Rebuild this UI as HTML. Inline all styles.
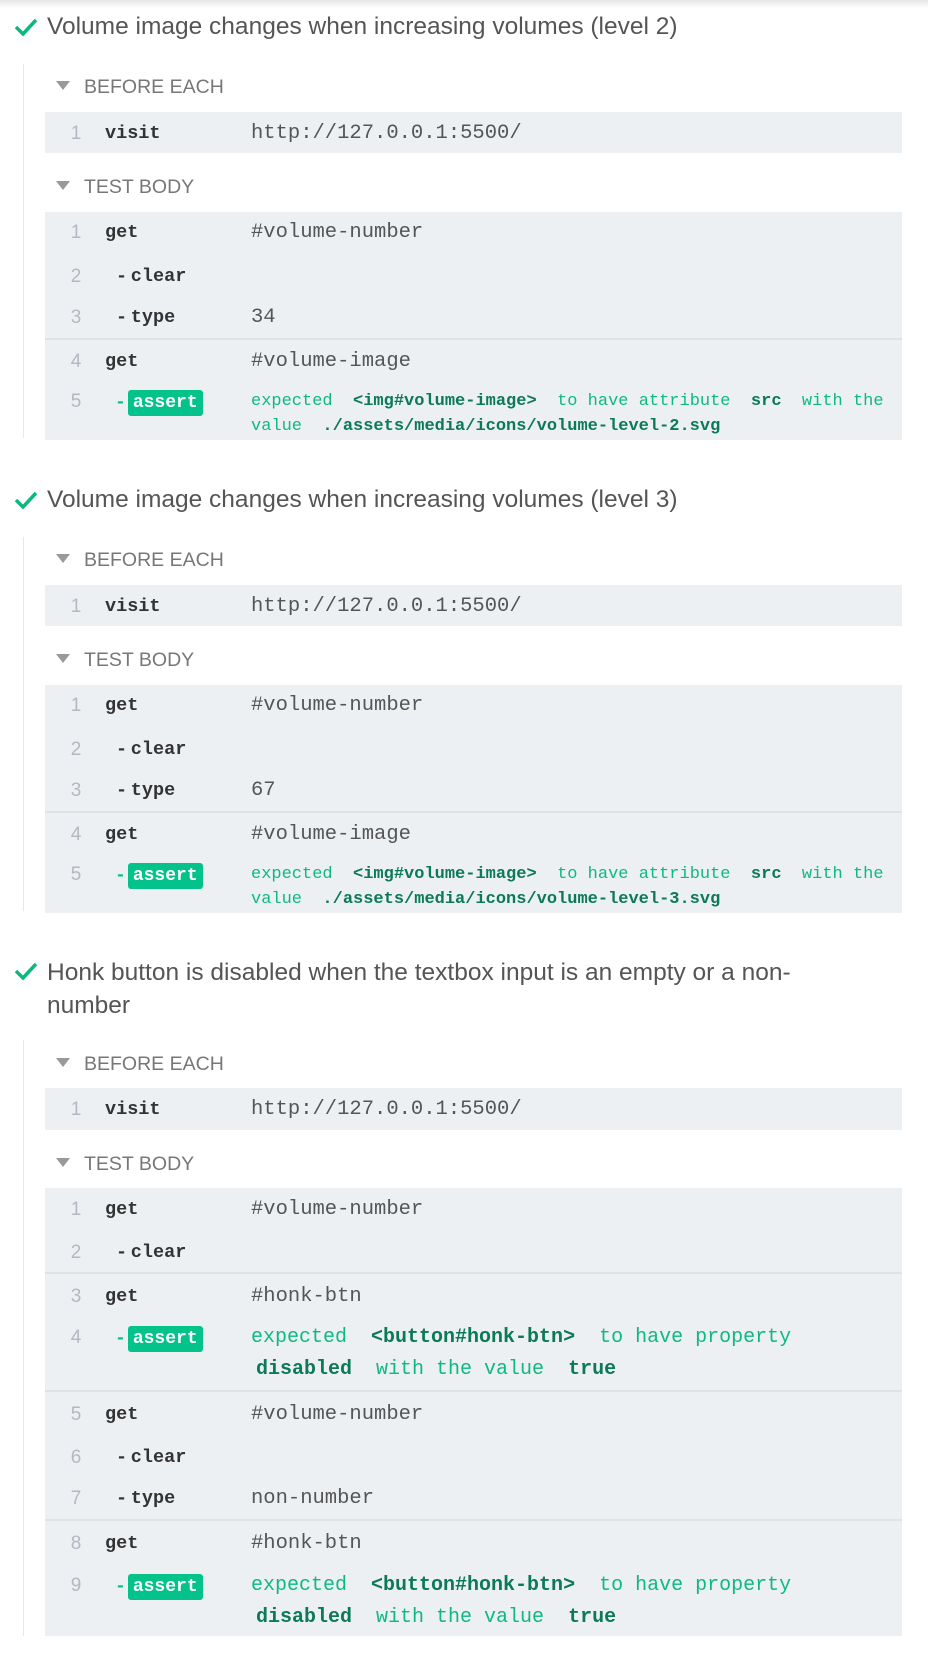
<!DOCTYPE html>
<html><head><meta charset="utf-8"><style>
*{margin:0;padding:0;box-sizing:border-box}
body{width:928px;height:1669px;background:#fff;position:relative;overflow:hidden;font-family:"Liberation Sans",sans-serif}
.sh{position:absolute;left:0;top:0;width:928px;height:8px;background:linear-gradient(#e6e6e6,#fff)}
.t{position:absolute;left:47px;font-size:24.5px;color:#555;line-height:28px;width:880px;white-space:nowrap}
.ck{position:absolute;left:14px;width:24px;height:20px}
.vl{position:absolute;left:23px;width:1px;background:#e6e8ea}
.h{position:absolute;left:56px;line-height:24px;font-size:19.5px;color:#777}
.h i{display:inline-block;width:0;height:0;border-left:7px solid transparent;border-right:7px solid transparent;border-top:9px solid #999;margin-right:14px;vertical-align:3px}
.box{position:absolute;left:45px;width:857px;background:#edf0f3}
.dv{position:absolute;left:45px;width:857px;height:2px;background:#dfe3e7}
.r{position:absolute;left:0;width:928px;height:24px;line-height:24px;white-space:nowrap;margin-top:1px}
.n{position:absolute;left:66px;width:20px;text-align:center;color:#b4b8c0;font-size:19px}
.c{position:absolute;left:105px;font-family:"Liberation Mono",monospace;font-weight:bold;font-size:18.5px;color:#333}
.c.s{left:116px}
.v{position:absolute;left:251px;font-family:"Liberation Mono",monospace;font-size:20.5px;color:#555}
.a{position:absolute;left:115px;font-family:"Liberation Mono",monospace;font-weight:bold;font-size:18px;color:#04c38a}
.a b{display:inline-block;background:#04c38a;color:#fff;border-radius:3px;padding:0 5px;height:26px;line-height:26px;font-size:18px;margin-left:2px}
.g{position:absolute;left:251px;font-family:"Liberation Mono",monospace;color:#0dba7e}
.g.sm{font-size:17px}
.g.lg{font-size:20px}
.g.w{left:256px}
.g strong{color:#0b7a55}
</style></head><body>
<div class="sh"></div>

<!-- Section 1 -->
<svg class="ck" style="top:17px" viewBox="0 0 24 20"><polyline points="2,10 9,17 22,3" fill="none" stroke="#0cb87f" stroke-width="3.5"/></svg>
<div class="t" style="top:13px">Volume image changes when increasing volumes (level 2)</div>
<div class="vl" style="top:64px;height:374px"></div>
<div class="h" style="top:75px"><i></i>BEFORE EACH</div>
<div class="box" style="top:112px;height:41px"></div>
<div class="r" style="top:121px"><span class="n">1</span><span class="c">visit</span><span class="v">http://127.0.0.1:5500/</span></div>
<div class="h" style="top:175px"><i></i>TEST BODY</div>
<div class="box" style="top:212px;height:228px"></div>
<div class="dv" style="top:338px"></div>
<div class="r" style="top:220px"><span class="n">1</span><span class="c">get</span><span class="v">#volume-number</span></div>
<div class="r" style="top:264px"><span class="n">2</span><span class="c s">-&thinsp;clear</span></div>
<div class="r" style="top:305px"><span class="n">3</span><span class="c s">-&thinsp;type</span><span class="v">34</span></div>
<div class="r" style="top:349px"><span class="n">4</span><span class="c">get</span><span class="v">#volume-image</span></div>
<div class="r" style="top:389px"><span class="n">5</span><span class="a">-<b>assert</b></span><span class="g sm">expected &nbsp;<strong>&lt;img#volume-image&gt;</strong> &nbsp;to have attribute &nbsp;<strong>src</strong> &nbsp;with the</span></div>
<div class="r" style="top:414px"><span class="g sm">value &nbsp;<strong>./assets/media/icons/volume-level-2.svg</strong></span></div>

<!-- Section 2 -->
<svg class="ck" style="top:490px" viewBox="0 0 24 20"><polyline points="2,10 9,17 22,3" fill="none" stroke="#0cb87f" stroke-width="3.5"/></svg>
<div class="t" style="top:486px">Volume image changes when increasing volumes (level 3)</div>
<div class="vl" style="top:537px;height:374px"></div>
<div class="h" style="top:548px"><i></i>BEFORE EACH</div>
<div class="box" style="top:585px;height:41px"></div>
<div class="r" style="top:594px"><span class="n">1</span><span class="c">visit</span><span class="v">http://127.0.0.1:5500/</span></div>
<div class="h" style="top:648px"><i></i>TEST BODY</div>
<div class="box" style="top:685px;height:228px"></div>
<div class="dv" style="top:811px"></div>
<div class="r" style="top:693px"><span class="n">1</span><span class="c">get</span><span class="v">#volume-number</span></div>
<div class="r" style="top:737px"><span class="n">2</span><span class="c s">-&thinsp;clear</span></div>
<div class="r" style="top:778px"><span class="n">3</span><span class="c s">-&thinsp;type</span><span class="v">67</span></div>
<div class="r" style="top:822px"><span class="n">4</span><span class="c">get</span><span class="v">#volume-image</span></div>
<div class="r" style="top:862px"><span class="n">5</span><span class="a">-<b>assert</b></span><span class="g sm">expected &nbsp;<strong>&lt;img#volume-image&gt;</strong> &nbsp;to have attribute &nbsp;<strong>src</strong> &nbsp;with the</span></div>
<div class="r" style="top:887px"><span class="g sm">value &nbsp;<strong>./assets/media/icons/volume-level-3.svg</strong></span></div>

<!-- Section 3 -->
<svg class="ck" style="top:961px" viewBox="0 0 24 20"><polyline points="2,10 9,17 22,3" fill="none" stroke="#0cb87f" stroke-width="3.5"/></svg>
<div class="t" style="top:956px;line-height:33px">Honk button is disabled when the textbox input is an empty or a non-<br>number</div>
<div class="vl" style="top:1040px;height:596px"></div>
<div class="h" style="top:1052px"><i></i>BEFORE EACH</div>
<div class="box" style="top:1088px;height:42px"></div>
<div class="r" style="top:1097px"><span class="n">1</span><span class="c">visit</span><span class="v">http://127.0.0.1:5500/</span></div>
<div class="h" style="top:1152px"><i></i>TEST BODY</div>
<div class="box" style="top:1188px;height:448px"></div>
<div class="dv" style="top:1272px"></div>
<div class="dv" style="top:1390px"></div>
<div class="dv" style="top:1519px"></div>
<div class="r" style="top:1197px"><span class="n">1</span><span class="c">get</span><span class="v">#volume-number</span></div>
<div class="r" style="top:1240px"><span class="n">2</span><span class="c s">-&thinsp;clear</span></div>
<div class="r" style="top:1284px"><span class="n">3</span><span class="c">get</span><span class="v">#honk-btn</span></div>
<div class="r" style="top:1325px"><span class="n">4</span><span class="a">-<b>assert</b></span><span class="g lg">expected &nbsp;<strong>&lt;button#honk-btn&gt;</strong> &nbsp;to have property</span></div>
<div class="r" style="top:1357px"><span class="g lg w"><strong>disabled</strong> &nbsp;with the value &nbsp;<strong>true</strong></span></div>
<div class="r" style="top:1402px"><span class="n">5</span><span class="c">get</span><span class="v">#volume-number</span></div>
<div class="r" style="top:1445px"><span class="n">6</span><span class="c s">-&thinsp;clear</span></div>
<div class="r" style="top:1486px"><span class="n">7</span><span class="c s">-&thinsp;type</span><span class="v">non-number</span></div>
<div class="r" style="top:1531px"><span class="n">8</span><span class="c">get</span><span class="v">#honk-btn</span></div>
<div class="r" style="top:1573px"><span class="n">9</span><span class="a">-<b>assert</b></span><span class="g lg">expected &nbsp;<strong>&lt;button#honk-btn&gt;</strong> &nbsp;to have property</span></div>
<div class="r" style="top:1605px"><span class="g lg w"><strong>disabled</strong> &nbsp;with the value &nbsp;<strong>true</strong></span></div>
</body></html>
